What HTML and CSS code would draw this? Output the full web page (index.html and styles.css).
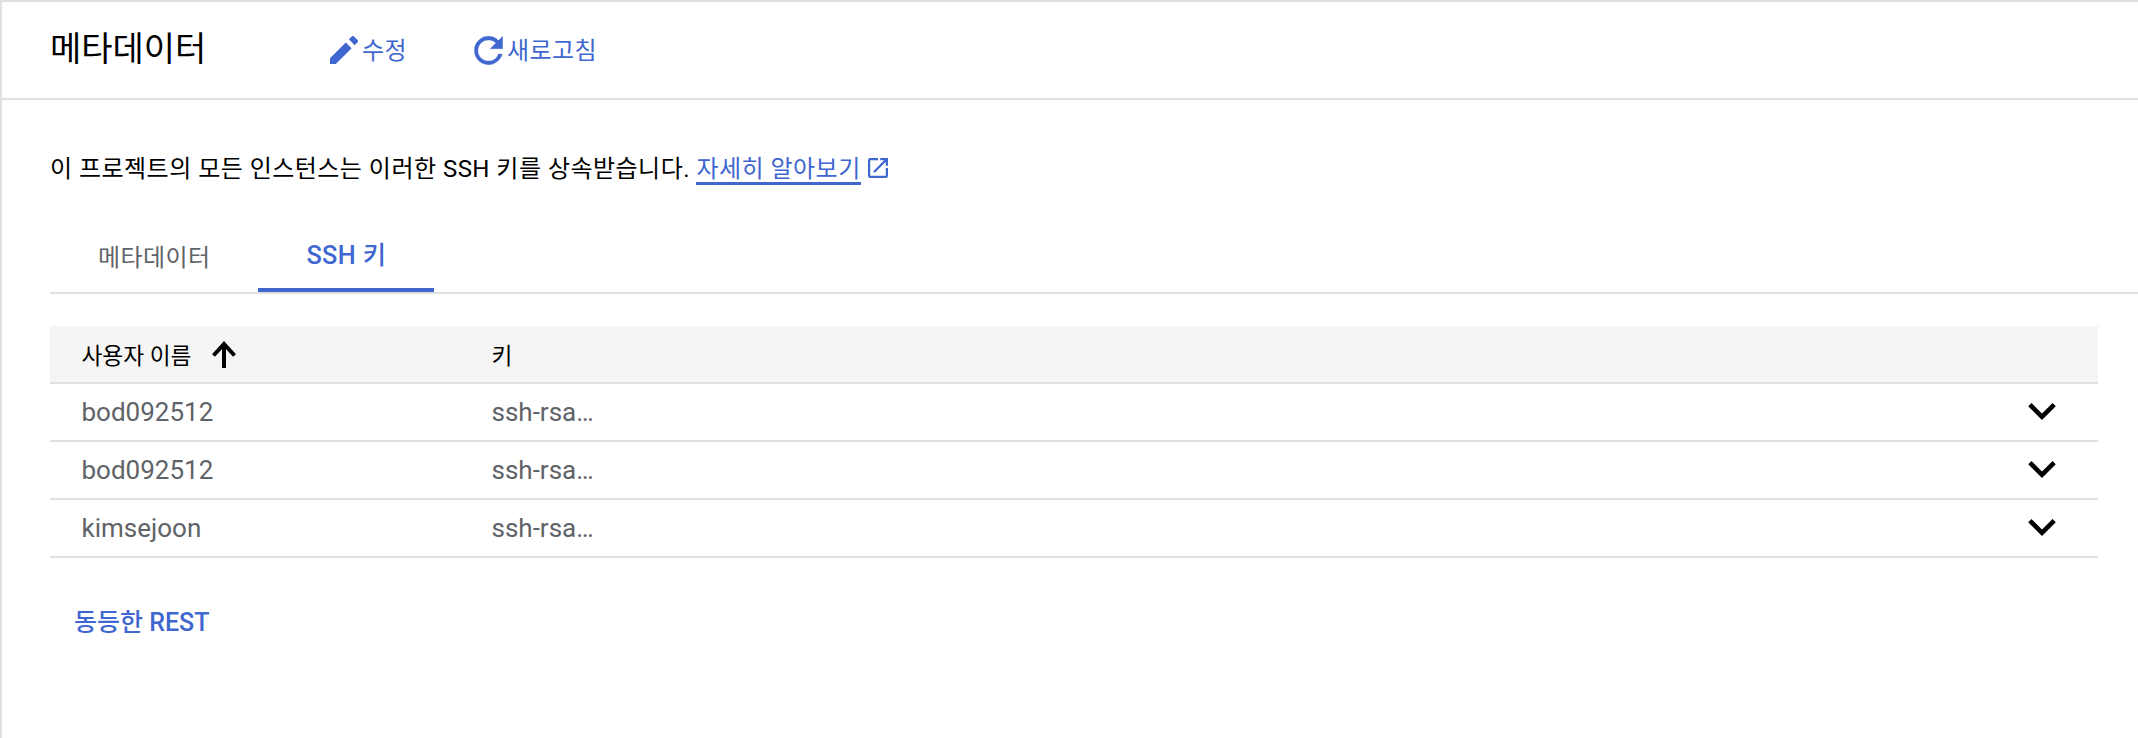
FILE: index.html
```html
<!DOCTYPE html>
<html lang="ko">
<head>
<meta charset="utf-8">
<title>메타데이터</title>
<link rel="stylesheet" href="styles.css">
</head>
<body>
<div class="page">
  <header class="toolbar">
    <h1 class="title">메타데이터</h1>
    <a class="action action-edit">
      <svg class="icon-edit" viewBox="3 3 18 18"><path d="M3 17.25V21h3.75L16.9 10.85l-3.75-3.75L3 17.25zM20.71 7.04a1 1 0 0 0 0-1.41l-2.34-2.34a1 1 0 0 0-1.41 0l-1.83 1.83 3.75 3.75 1.83-1.83z"/></svg>
      <span>수정</span>
    </a>
    <a class="action action-refresh">
      <svg class="icon-refresh" viewBox="3.8 3.8 16.4 16.4"><path d="M17.65 6.35A7.958 7.958 0 0 0 12 4c-4.42 0-7.99 3.58-7.99 8s3.57 8 7.99 8c3.73 0 6.84-2.55 7.73-6h-2.08A5.99 5.99 0 0 1 12 18c-3.31 0-6-2.69-6-6s2.69-6 6-6c1.66 0 3.14.69 4.22 1.78L13 11h7V4l-2.35 2.35z"/></svg>
      <span>새로고침</span>
    </a>
  </header>
  <main class="content">
    <p class="intro">이 프로젝트의 모든 인스턴스는 이러한 SSH 키를 상속받습니다. <a class="learn">자세히 알아보기</a><svg class="external" viewBox="3 3 18 18"><path d="M19 19H5V5h7V3H5a2 2 0 0 0-2 2v14a2 2 0 0 0 2 2h14a2 2 0 0 0 2-2v-7h-2v7zM14 3v2h3.59l-9.83 9.83 1.41 1.41L19 6.41V10h2V3h-7z"/></svg></p>
    <nav class="tabs">
      <a class="tab">메타데이터</a>
      <a class="tab tab-active">SSH 키</a>
    </nav>
    <div class="table">
      <div class="row row-head">
        <div class="cell-user">사용자 이름<svg class="sort" viewBox="0 0 24 27"><path d="M12 27V3M1.5 14.5L12 3l10.5 11.5" fill="none" stroke="#000" stroke-width="4"/></svg></div>
        <div class="cell-key">키</div>
      </div>
      <div class="row">
        <div class="cell-user">bod092512</div>
        <div class="cell-key">ssh-rsa…</div>
        <svg class="chevron" viewBox="6 8.59 12 7.41"><path d="M7.41 8.59L12 13.17l4.59-4.58L18 10l-6 6-6-6 1.41-1.41z"/></svg>
      </div>
      <div class="row">
        <div class="cell-user">bod092512</div>
        <div class="cell-key">ssh-rsa…</div>
        <svg class="chevron" viewBox="6 8.59 12 7.41"><path d="M7.41 8.59L12 13.17l4.59-4.58L18 10l-6 6-6-6 1.41-1.41z"/></svg>
      </div>
      <div class="row">
        <div class="cell-user">kimsejoon</div>
        <div class="cell-key">ssh-rsa…</div>
        <svg class="chevron" viewBox="6 8.59 12 7.41"><path d="M7.41 8.59L12 13.17l4.59-4.58L18 10l-6 6-6-6 1.41-1.41z"/></svg>
      </div>
    </div>
    <a class="rest">동등한 REST</a>
  </main>
</div>
</body>
</html>
```
FILE: styles.css
```css
* { box-sizing: border-box; }
html, body { margin: 0; padding: 0; background: #fff; }
body { font-family: Roboto, "Noto Sans CJK KR", sans-serif; color: #000; overflow: hidden; }
.page { height: 738px; border-top: 2px solid #e0e0e0; border-left: 2px solid #e0e0e0; }
.toolbar { height: 98px; border-bottom: 2px solid #e0e0e0; display: flex; align-items: center; padding-left: 48px; }
.title { margin: 0 0 2px; width: 280px; font-size: 34px; line-height: 40px; font-weight: 400; }
.action { display: flex; align-items: center; gap: 4px; color: #4067d0; font-size: 24px; line-height: 32px; letter-spacing: .4px; }
.action span { padding-top: 2px; }
.icon-edit { width: 28px; height: 28px; fill: #4067d0; }
.icon-refresh { width: 29px; height: 29px; fill: #4067d0; stroke: #4067d0; stroke-width: .2; }
.action-edit { margin-right: 67px; }
.content { padding-left: 48px; }
.intro { margin: 0; padding-top: 53px; height: 120px; font-size: 24px; line-height: 32px; letter-spacing: .47px; display: flex; align-items: flex-start; white-space: pre; }
.learn { color: #4067d0; border-bottom: 3px solid #4067d0; height: 32px; }
.external { width: 20px; height: 20px; fill: #4067d0; margin: 5px 0 0 7px; }
.tabs { height: 74px; border-bottom: 2px solid #e0e0e0; display: flex; }
.tab { padding: 0 48px; display: flex; align-items: center; font-size: 24px; letter-spacing: .4px; color: #5f6368; padding-bottom: 2px; }
.tab-active { padding-left: 48px; padding-right: 47px; color: #4067d0; font-weight: 500; font-size: 25.3px; border-bottom: 4px solid #4067d0; }
.table { margin-top: 32px; width: 2048px; }
.row { height: 58px; border-bottom: 2px solid #e0e0e0; display: flex; align-items: center; padding-left: 31.5px; font-size: 26px; color: #5f6368; position: relative; }
.row-head { background: #f5f5f5; color: #000; font-size: 22.7px; }
.cell-user { width: 410px; display: flex; align-items: center; }
.sort { width: 24px; height: 27px; margin-left: 20px; }
.chevron { width: 28px; height: 17px; position: absolute; right: 42px; top: 19px; fill: #000; }
.rest { display: block; margin: 49px 0 0 24px; line-height: 32px; color: #4067d0; font-size: 25px; font-weight: 500; }
```
